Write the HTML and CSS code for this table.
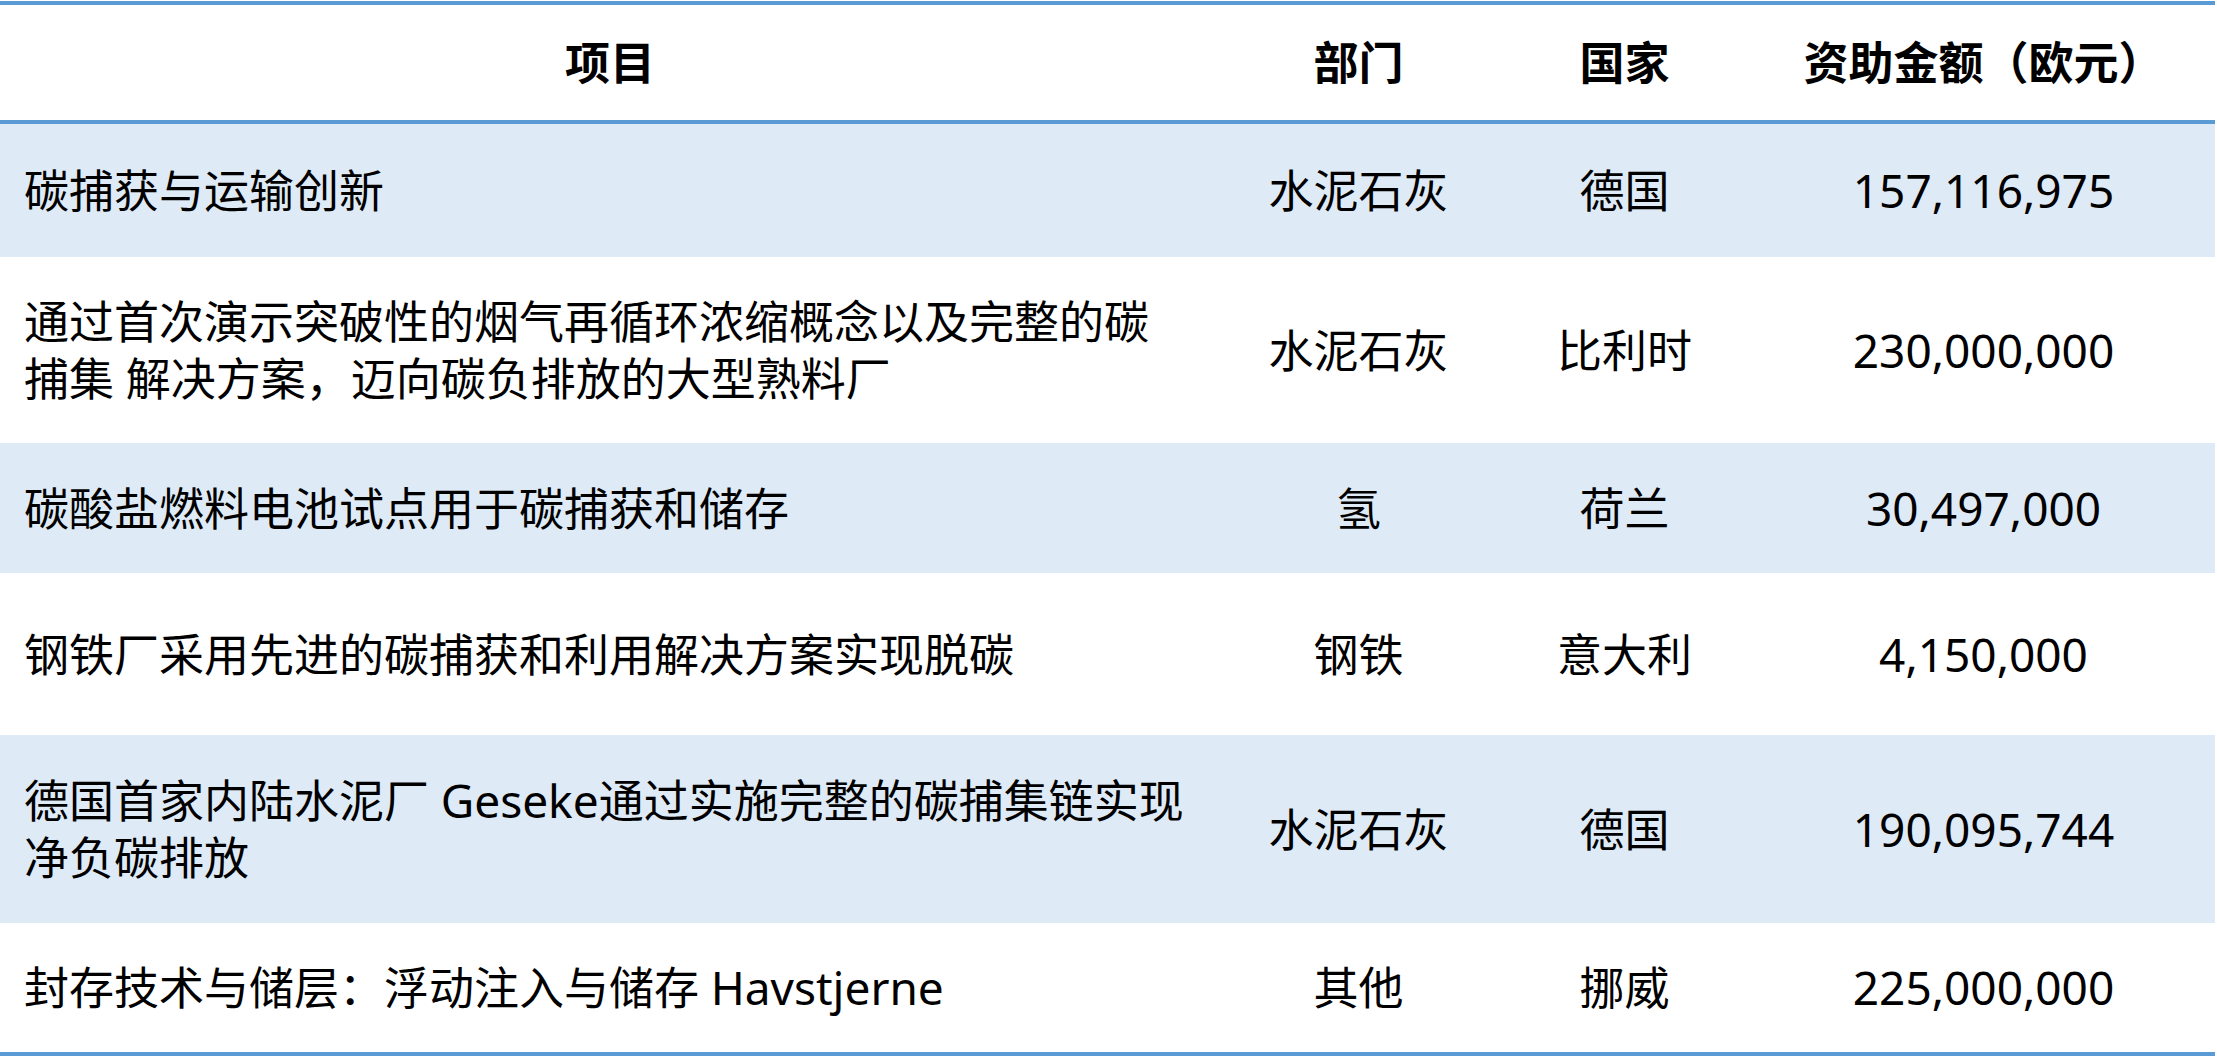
FILE: index.html
```html
<!DOCTYPE html>
<html lang="zh-CN">
<head>
<meta charset="utf-8">
<title>资助项目</title>
<link rel="stylesheet" href="styles.css">
</head>
<body>
<div class="tbl">
  <div class="row head">
    <div class="cell">项目</div>
    <div class="cell">部门</div>
    <div class="cell">国家</div>
    <div class="cell">资助金额（欧元）</div>
  </div>
  <div class="row band r1">
    <div class="cell proj">碳捕获与运输创新</div>
    <div class="cell">水泥石灰</div>
    <div class="cell">德国</div>
    <div class="cell num">157,116,975</div>
  </div>
  <div class="row r2">
    <div class="cell proj">通过首次演示突破性的烟气再循环浓缩概念以及完整的碳<br>捕集 解决方案，迈向碳负排放的大型熟料厂</div>
    <div class="cell">水泥石灰</div>
    <div class="cell">比利时</div>
    <div class="cell num">230,000,000</div>
  </div>
  <div class="row band r3">
    <div class="cell proj">碳酸盐燃料电池试点用于碳捕获和储存</div>
    <div class="cell">氢</div>
    <div class="cell">荷兰</div>
    <div class="cell num">30,497,000</div>
  </div>
  <div class="row r4">
    <div class="cell proj">钢铁厂采用先进的碳捕获和利用解决方案实现脱碳</div>
    <div class="cell">钢铁</div>
    <div class="cell">意大利</div>
    <div class="cell num">4,150,000</div>
  </div>
  <div class="row band r5">
    <div class="cell proj">德国首家内陆水泥厂 <span class="lat">Geseke</span>通过实施完整的碳捕集链实现<br>净负碳排放</div>
    <div class="cell">水泥石灰</div>
    <div class="cell">德国</div>
    <div class="cell num">190,095,744</div>
  </div>
  <div class="row r6">
    <div class="cell proj">封存技术与储层：浮动注入与储存 <span class="lat">Havstjerne</span></div>
    <div class="cell">其他</div>
    <div class="cell">挪威</div>
    <div class="cell num">225,000,000</div>
  </div>
</div>
</body>
</html>
```
FILE: styles.css
```css
html, body {
  margin: 0;
  padding: 0;
  background: #ffffff;
}

.tbl {
  width: 2215px;
  margin-top: 1px;
  border-top: 4px solid #5b9bd5;
  border-bottom: 4px solid #5b9bd5;
  font-family: "Noto Sans", "Noto Sans CJK SC", sans-serif;
  font-size: 45px;
  color: #000000;
}

.row {
  display: grid;
  grid-template-columns: 1220px 277px 255px 1fr;
  align-items: center;
}

.cell {
  text-align: center;
  white-space: nowrap;
  line-height: 57px;
}

.cell.proj {
  text-align: left;
  padding-left: 24px;
}

.cell.num {
  font-size: 46px;
}

.lat {
  font-size: 46px;
}

.head {
  height: 115px;
  border-bottom: 4px solid #5b9bd5;
  font-weight: 700;
}

.band {
  background: #deeaf6;
}

.r1 { height: 133px; }
.r2 { height: 186px; }
.r3 { height: 130px; }
.r4 { height: 162px; }
.r5 { height: 188px; }
.r6 { height: 129px; }
```
